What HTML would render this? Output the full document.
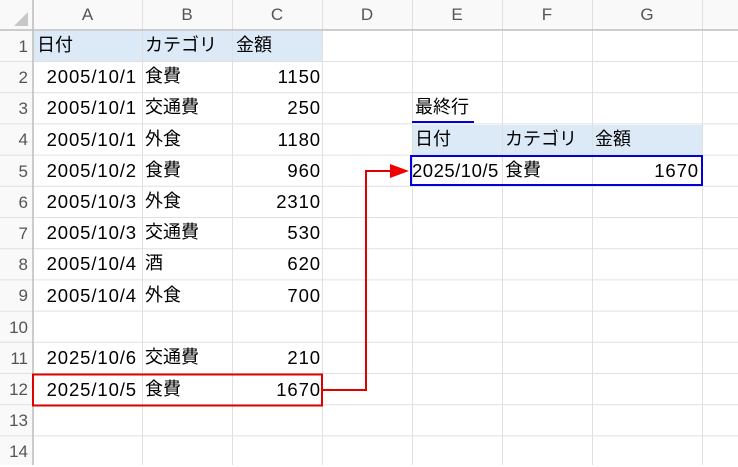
<!DOCTYPE html>
<html><head><meta charset="utf-8"><style>
body{margin:0;width:738px;height:465px;overflow:hidden;background:#fff;font-family:"Liberation Sans","Noto Sans CJK JP",sans-serif;position:relative}
.a{position:absolute;box-sizing:border-box}
.t{position:absolute;font-size:18px;line-height:31px;color:#000;white-space:nowrap}
.n{font-size:18.5px;letter-spacing:0.9px}
.h{position:absolute;font-size:17px;color:#555;text-align:center;line-height:30px}
.r{position:absolute;font-size:17px;color:#555;text-align:right;width:28px;line-height:31px}
</style></head><body>
<div class="a" style="left:0;top:0;width:738px;height:30px;background:#f9f9f9"></div>
<div class="a" style="left:0;top:0;width:33px;height:465px;background:#f9f9f9"></div>
<div class="a" style="left:33px;top:30.5px;width:289px;height:31px;background:#dce9f7"></div>
<div class="a" style="left:412px;top:124.5px;width:290px;height:31px;background:#dce9f7"></div>
<svg class="a" style="left:0;top:0" width="738" height="465">
<g stroke="#e0e0e0" stroke-width="1">
<line x1="142.5" y1="0" x2="142.5" y2="465"/><line x1="232.5" y1="0" x2="232.5" y2="465"/><line x1="322.5" y1="0" x2="322.5" y2="465"/><line x1="412.5" y1="0" x2="412.5" y2="465"/><line x1="502.5" y1="0" x2="502.5" y2="465"/><line x1="592.5" y1="0" x2="592.5" y2="465"/><line x1="702.5" y1="0" x2="702.5" y2="465"/>
<line x1="0" y1="61.5" x2="738" y2="61.5"/><line x1="0" y1="92.7" x2="738" y2="92.7"/><line x1="0" y1="123.9" x2="738" y2="123.9"/><line x1="0" y1="155.1" x2="738" y2="155.1"/><line x1="0" y1="186.3" x2="738" y2="186.3"/><line x1="0" y1="217.5" x2="738" y2="217.5"/><line x1="0" y1="248.7" x2="738" y2="248.7"/><line x1="0" y1="279.9" x2="738" y2="279.9"/><line x1="0" y1="311.1" x2="738" y2="311.1"/><line x1="0" y1="342.3" x2="738" y2="342.3"/><line x1="0" y1="373.5" x2="738" y2="373.5"/><line x1="0" y1="404.7" x2="738" y2="404.7"/><line x1="0" y1="435.9" x2="738" y2="435.9"/>
</g>
<line x1="0" y1="30" x2="738" y2="30" stroke="#bdbdbd" stroke-width="1.5"/>
<line x1="33" y1="0" x2="33" y2="465" stroke="#bdbdbd" stroke-width="1.5"/>
<polygon points="28,12 28,26 14,26" fill="#c8c8c8"/>
<rect x="33" y="374.5" width="289" height="31" fill="none" stroke="#e00000" stroke-width="2"/>
<rect x="411" y="156" width="291" height="29" fill="none" stroke="#0000e0" stroke-width="2"/>
<line x1="412" y1="122" x2="474" y2="122" stroke="#0000e0" stroke-width="2"/>
<polyline points="322,390 366,390 366,171 392,171" fill="none" stroke="#e00000" stroke-width="2"/>
<polygon points="390,164 409,171 390,178" fill="#f00000"/>
</svg>
<div class="h" style="left:33px;width:109px;top:0">A</div><div class="h" style="left:142px;width:90px;top:0">B</div><div class="h" style="left:232px;width:90px;top:0">C</div><div class="h" style="left:322px;width:90px;top:0">D</div><div class="h" style="left:412px;width:90px;top:0">E</div><div class="h" style="left:502px;width:90px;top:0">F</div><div class="h" style="left:592px;width:110px;top:0">G</div>
<div class="r" style="top:31px">1</div><div class="r" style="top:62px">2</div><div class="r" style="top:93px">3</div><div class="r" style="top:124px">4</div><div class="r" style="top:156px">5</div><div class="r" style="top:187px">6</div><div class="r" style="top:218px">7</div><div class="r" style="top:249px">8</div><div class="r" style="top:280px">9</div><div class="r" style="top:312px">10</div><div class="r" style="top:343px">11</div><div class="r" style="top:374px">12</div><div class="r" style="top:405px">13</div><div class="r" style="top:436px">14</div>
<div class="t" style="left:37px;top:30px">日付</div><div class="t" style="left:145px;top:30px">カテゴリ</div><div class="t" style="left:236px;top:30px">金額</div>
<div class="t n" style="right:601px;top:61px">2005/10/1</div><div class="t" style="left:145px;top:61px">食費</div><div class="t n" style="right:417px;top:61px">1150</div>
<div class="t n" style="right:601px;top:92px">2005/10/1</div><div class="t" style="left:145px;top:92px">交通費</div><div class="t n" style="right:417px;top:92px">250</div>
<div class="t n" style="right:601px;top:124px">2005/10/1</div><div class="t" style="left:145px;top:124px">外食</div><div class="t n" style="right:417px;top:124px">1180</div>
<div class="t n" style="right:601px;top:155px">2005/10/2</div><div class="t" style="left:145px;top:155px">食費</div><div class="t n" style="right:417px;top:155px">960</div>
<div class="t n" style="right:601px;top:186px">2005/10/3</div><div class="t" style="left:145px;top:186px">外食</div><div class="t n" style="right:417px;top:186px">2310</div>
<div class="t n" style="right:601px;top:217px">2005/10/3</div><div class="t" style="left:145px;top:217px">交通費</div><div class="t n" style="right:417px;top:217px">530</div>
<div class="t n" style="right:601px;top:248px">2005/10/4</div><div class="t" style="left:145px;top:248px">酒</div><div class="t n" style="right:417px;top:248px">620</div>
<div class="t n" style="right:601px;top:280px">2005/10/4</div><div class="t" style="left:145px;top:280px">外食</div><div class="t n" style="right:417px;top:280px">700</div>
<div class="t n" style="right:601px;top:342px">2025/10/6</div><div class="t" style="left:145px;top:342px">交通費</div><div class="t n" style="right:417px;top:342px">210</div>
<div class="t n" style="right:601px;top:374px">2025/10/5</div><div class="t" style="left:145px;top:374px">食費</div><div class="t n" style="right:417px;top:374px">1670</div>
<div class="t" style="left:415px;top:92px">最終行</div>
<div class="t" style="left:415px;top:124px">日付</div><div class="t" style="left:505px;top:124px">カテゴリ</div><div class="t" style="left:595px;top:124px">金額</div>
<div class="t n" style="left:412px;top:155px;letter-spacing:0.5px">2025/10/5</div><div class="t" style="left:505px;top:155px">食費</div><div class="t n" style="right:39px;top:155px">1670</div>
</body></html>
